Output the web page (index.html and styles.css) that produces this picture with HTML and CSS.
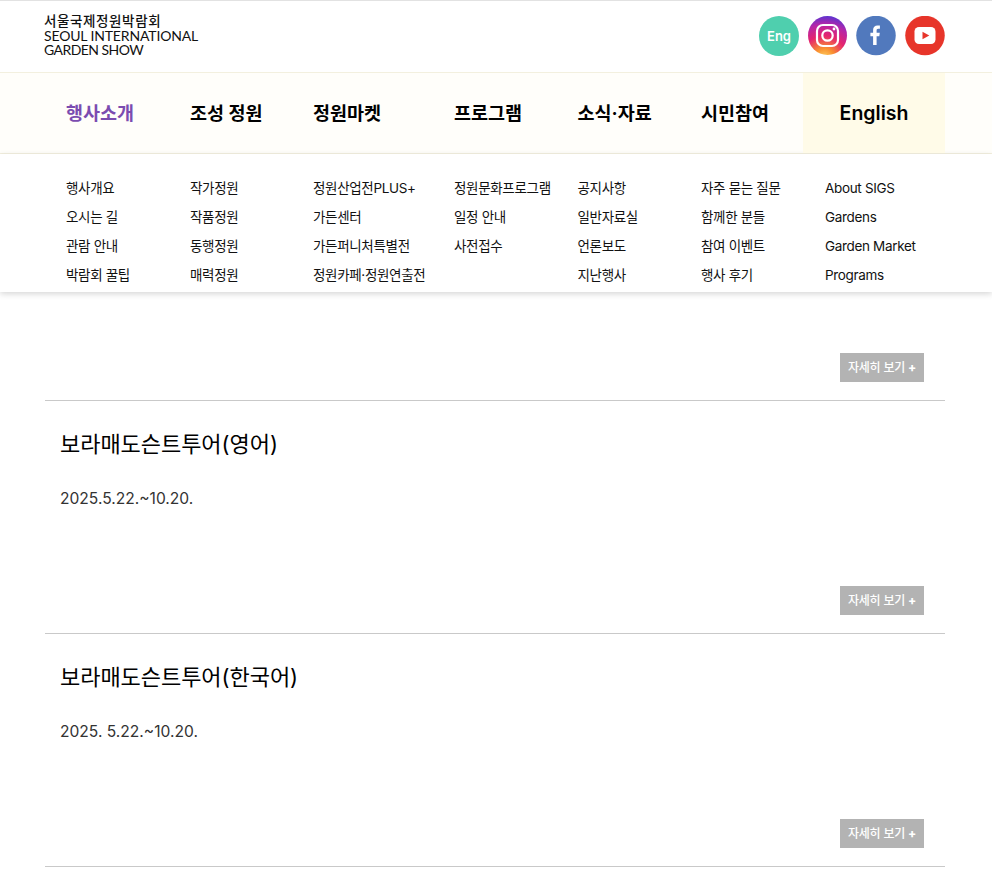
FILE: index.html
```html
<!DOCTYPE html>
<html lang="ko">
<head>
<meta charset="utf-8">
<title>서울국제정원박람회</title>
<link rel="stylesheet" href="styles.css">
</head>
<body>
<header class="top">
  <div class="top-inner">
    <a class="logo" href="#">
      <span class="logo-ko">서울국제정원박람회</span>
      <span class="logo-en">SEOUL INTERNATIONAL</span>
      <span class="logo-en logo-en-tight">GARDEN SHOW</span>
    </a>
    <div class="social">
      <a class="circle eng" href="#">Eng</a>
      <a class="circle" href="#" aria-label="Instagram">
        <svg width="40" height="40" viewBox="0 0 40 40">
          <defs>
            <radialGradient id="ig" cx="0.42" cy="1.08" r="1.15">
              <stop offset="0" stop-color="#fdd668"/>
              <stop offset="0.22" stop-color="#f9902f"/>
              <stop offset="0.5" stop-color="#e5256e"/>
              <stop offset="0.75" stop-color="#b526a8"/>
              <stop offset="1" stop-color="#4338dc"/>
            </radialGradient>
          </defs>
          <circle cx="19.5" cy="19.5" r="19.5" fill="url(#ig)"/>
          <rect x="9" y="9" width="21" height="21" rx="6" fill="none" stroke="#fff" stroke-width="2.2"/>
          <circle cx="19.5" cy="19.5" r="5.2" fill="none" stroke="#fff" stroke-width="2.2"/>
          <circle cx="26" cy="13" r="1.4" fill="#fff"/>
        </svg>
      </a>
      <a class="circle" href="#" aria-label="Facebook">
        <svg width="40" height="40" viewBox="0 0 40 40">
          <circle cx="20" cy="19.5" r="19.75" fill="#5179bd"/>
          <path d="M20.6 28.9V20.2h2.7l.5-3.5h-3.2v-2.2c0-1 .3-1.7 1.7-1.7h1.6V9.6c-.3 0-1.3-.1-2.4-.1-2.6 0-4.4 1.6-4.4 4.5v2.7h-2.7v3.5h2.7v8.7z" fill="#fff"/>
        </svg>
      </a>
      <a class="circle" href="#" aria-label="YouTube">
        <svg width="40" height="40" viewBox="0 0 40 40">
          <circle cx="20" cy="19.5" r="19.75" fill="#e7352a"/>
          <rect x="9.5" y="11" width="21" height="17" rx="4.5" fill="#fff"/>
          <path d="M17.5 15.7v7.6l6.8-3.8z" fill="#e7352a"/>
        </svg>
      </a>
    </div>
  </div>
</header>

<nav class="gnb">
  <div class="bar">
    <ul class="cols bar-cols">
      <li class="bar-item active">행사소개</li>
      <li class="bar-item">조성 정원</li>
      <li class="bar-item">정원마켓</li>
      <li class="bar-item">프로그램</li>
      <li class="bar-item">소식·자료</li>
      <li class="bar-item">시민참여</li>
      <li class="bar-item english">English</li>
    </ul>
  </div>
  <div class="drop">
    <div class="cols drop-cols">
      <ul class="sub">
        <li>행사개요</li><li>오시는 길</li><li>관람 안내</li><li>박람회 꿀팁</li>
      </ul>
      <ul class="sub">
        <li>작가정원</li><li>작품정원</li><li>동행정원</li><li>매력정원</li>
      </ul>
      <ul class="sub">
        <li>정원산업전PLUS+</li><li>가든센터</li><li>가든퍼니처특별전</li><li>정원카페·정원연출전</li>
      </ul>
      <ul class="sub">
        <li>정원문화프로그램</li><li>일정 안내</li><li>사전접수</li>
      </ul>
      <ul class="sub">
        <li>공지사항</li><li>일반자료실</li><li>언론보도</li><li>지난행사</li>
      </ul>
      <ul class="sub">
        <li>자주 묻는 질문</li><li>함께한 분들</li><li>참여 이벤트</li><li>행사 후기</li>
      </ul>
      <ul class="sub">
        <li>About SIGS</li><li>Gardens</li><li>Garden Market</li><li>Programs</li>
      </ul>
    </div>
  </div>
</nav>

<main class="list">
  <article class="card first">
    <a class="more" href="#">자세히 보기 <b class="plus">+</b></a>
  </article>
  <article class="card">
    <h2 class="card-title">보라매도슨트투어(영어)</h2>
    <p class="card-date">2025.5.22.~10.20.</p>
    <a class="more" href="#">자세히 보기 <b class="plus">+</b></a>
  </article>
  <article class="card">
    <h2 class="card-title">보라매도슨트투어(한국어)</h2>
    <p class="card-date">2025. 5.22.~10.20.</p>
    <a class="more" href="#">자세히 보기 <b class="plus">+</b></a>
  </article>
</main>
</body>
</html>
```

FILE: styles.css
```css
* { box-sizing: border-box; }
html, body { margin: 0; padding: 0; }
body {
  background: #fff;
  color: #000;
  font-family: Inter, "Noto Sans CJK KR", "Noto Sans", sans-serif;
  overflow: hidden;
  height: 872px;
}
ul { list-style: none; margin: 0; padding: 0; }
a { color: inherit; text-decoration: none; }

.top {
  height: 72px;
  border-top: 1px solid #e2e2e2;
}
.top-inner {
  width: 900px;
  height: 71px;
  margin-left: 45px;
  display: flex;
  justify-content: space-between;
  align-items: center;
}
.logo {
  display: flex;
  flex-direction: column;
  margin-left: -1px;
  margin-top: -2px;
  color: #111;
}
.logo-ko {
  font-size: 13.5px;
  font-weight: 500;
  line-height: 15px;
  letter-spacing: 0.6px;
}
.logo-en {
  font-family: Lato, sans-serif;
  font-size: 14px;
  line-height: 14px;
  letter-spacing: -0.15px;
}
.logo-en-tight { letter-spacing: -0.55px; }
.social {
  display: flex;
  gap: 9px;
  align-items: center;
  margin-top: -1px;
}
.social .circle:nth-child(3) { margin-left: -1px; }
.circle {
  width: 40px;
  height: 40px;
  display: block;
  border-radius: 50%;
}
.circle svg { display: block; }
.eng {
  background: #4fcfae;
  color: #fff;
  font-size: 13px;
  font-weight: 600;
  line-height: 40px;
  text-align: center;
}

.gnb { position: relative; }
.bar {
  height: 82px;
  background: #fffefa;
  border-top: 1px solid #f3f0df;
  border-bottom: 1px solid #f3f0df;
}
.cols {
  width: 900px;
  margin-left: 45px;
  display: grid;
  grid-template-columns: 124px 123px 141px 123.5px 123.5px 123px 142px;
}
.bar-cols { height: 80px; }
.bar-item {
  padding-left: 21px;
  font-size: 18.5px;
  font-weight: 700;
  line-height: 80px;
}
.bar-item.active { color: #7b4cb0; }
.bar-item.english {
  padding-left: 0;
  text-align: center;
  font-size: 19.5px;
  font-weight: 600;
  background: #fffbe8;
}
.drop {
  height: 138px;
  padding-top: 20px;
  background: #fff;
  box-shadow: 0 2px 6px rgba(0, 0, 0, 0.16);
}
.sub { padding-left: 21px; }
.sub:last-child { padding-left: 22px; }
.sub li {
  font-size: 13.5px;
  line-height: 29px;
  letter-spacing: -0.33px;
  color: #111;
  white-space: nowrap;
}

.list {
  width: 900px;
  margin-left: 45px;
}
.card {
  height: 233px;
  padding: 20px 15px 0;
  border-bottom: 1px solid #c9c9c9;
  display: flex;
  flex-direction: column;
}
.card.first {
  height: 109px;
  padding-top: 0;
  justify-content: flex-end;
  padding-bottom: 18px;
}
.card-title {
  margin: 0;
  font-size: 22px;
  font-weight: 400;
  line-height: 46px;
  letter-spacing: -0.05px;
}
.card-date {
  margin: 20px 0 0;
  font-size: 15.6px;
  line-height: 24px;
  color: #333;
}
.more {
  align-self: flex-end;
  margin-top: auto;
  margin-bottom: 18px;
  margin-right: 6px;
  width: 84px;
  height: 29px;
  background: #b3b3b3;
  color: #fff;
  font-size: 12px;
  font-weight: 500;
  line-height: 29px;
  text-align: center;
  letter-spacing: -0.2px;
}
.plus { font-weight: 800; }
.card.first .more { margin-bottom: 0; }
```
